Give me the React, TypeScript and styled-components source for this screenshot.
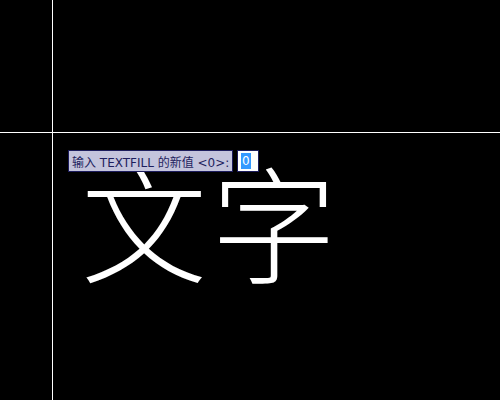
import styled, {createGlobalStyle} from 'styled-components';

const GlobalStyle = createGlobalStyle`
  html, body {
    margin: 0;
    padding: 0;
    background: #000;
  }
`;

const Canvas = styled.div`
  position: relative;
  width: 500px;
  height: 400px;
  overflow: hidden;
  background: #000;
`;

const CrossLine = styled.div<{$axis: 'x' | 'y'; $at: number}>`
  position: absolute;
  background: #ffffff;
  ${({$axis, $at}) =>
    $axis === 'x'
      ? `left: ${$at}px; top: 0; width: 1px; height: 100%;`
      : `top: ${$at}px; left: 0; height: 1px; width: 100%;`}
`;

const DrawnText = styled.div`
  position: absolute;
  left: 81px;
  top: 156px;
  font-family: 'Noto Sans CJK SC', sans-serif;
  font-weight: 300;
  font-size: 126px;
  letter-spacing: 4px;
  line-height: 1;
  color: #fff;
  white-space: nowrap;
`;

const Prompt = styled.div`
  position: absolute;
  left: 68px;
  top: 150px;
  display: flex;
  gap: 4px;
  font-family: 'DejaVu Sans', 'Noto Sans CJK SC', sans-serif;
  font-size: 12px;
`;

const PromptLabel = styled.div`
  box-sizing: border-box;
  height: 22px;
  width: 165px;
  padding: 0 0 0 3px;
  display: flex;
  align-items: center;
  background: #c4c4dc;
  border: 1px solid #1c1c5c;
  color: #1e1e5e;
  white-space: nowrap;
`;

const PromptInput = styled.div`
  box-sizing: border-box;
  height: 22px;
  width: 22px;
  padding: 0 0 0 3px;
  display: flex;
  align-items: center;
  background: #fff;
  border: 1px solid #1c1c5c;
`;

const Selected = styled.span`
  background: #3399ff;
  color: #fff;
  padding: 0 1px;
  line-height: 16px;
`;

export default function App() {
  return (
    <>
      <GlobalStyle />
      <Canvas>
        <DrawnText>文字</DrawnText>
        <CrossLine $axis="x" $at={52} />
        <CrossLine $axis="y" $at={132} />
        <Prompt>
          <PromptLabel>输入 TEXTFILL 的新值 &lt;0&gt;:</PromptLabel>
          <PromptInput>
            <Selected>0</Selected>
          </PromptInput>
        </Prompt>
      </Canvas>
    </>
  );
}
